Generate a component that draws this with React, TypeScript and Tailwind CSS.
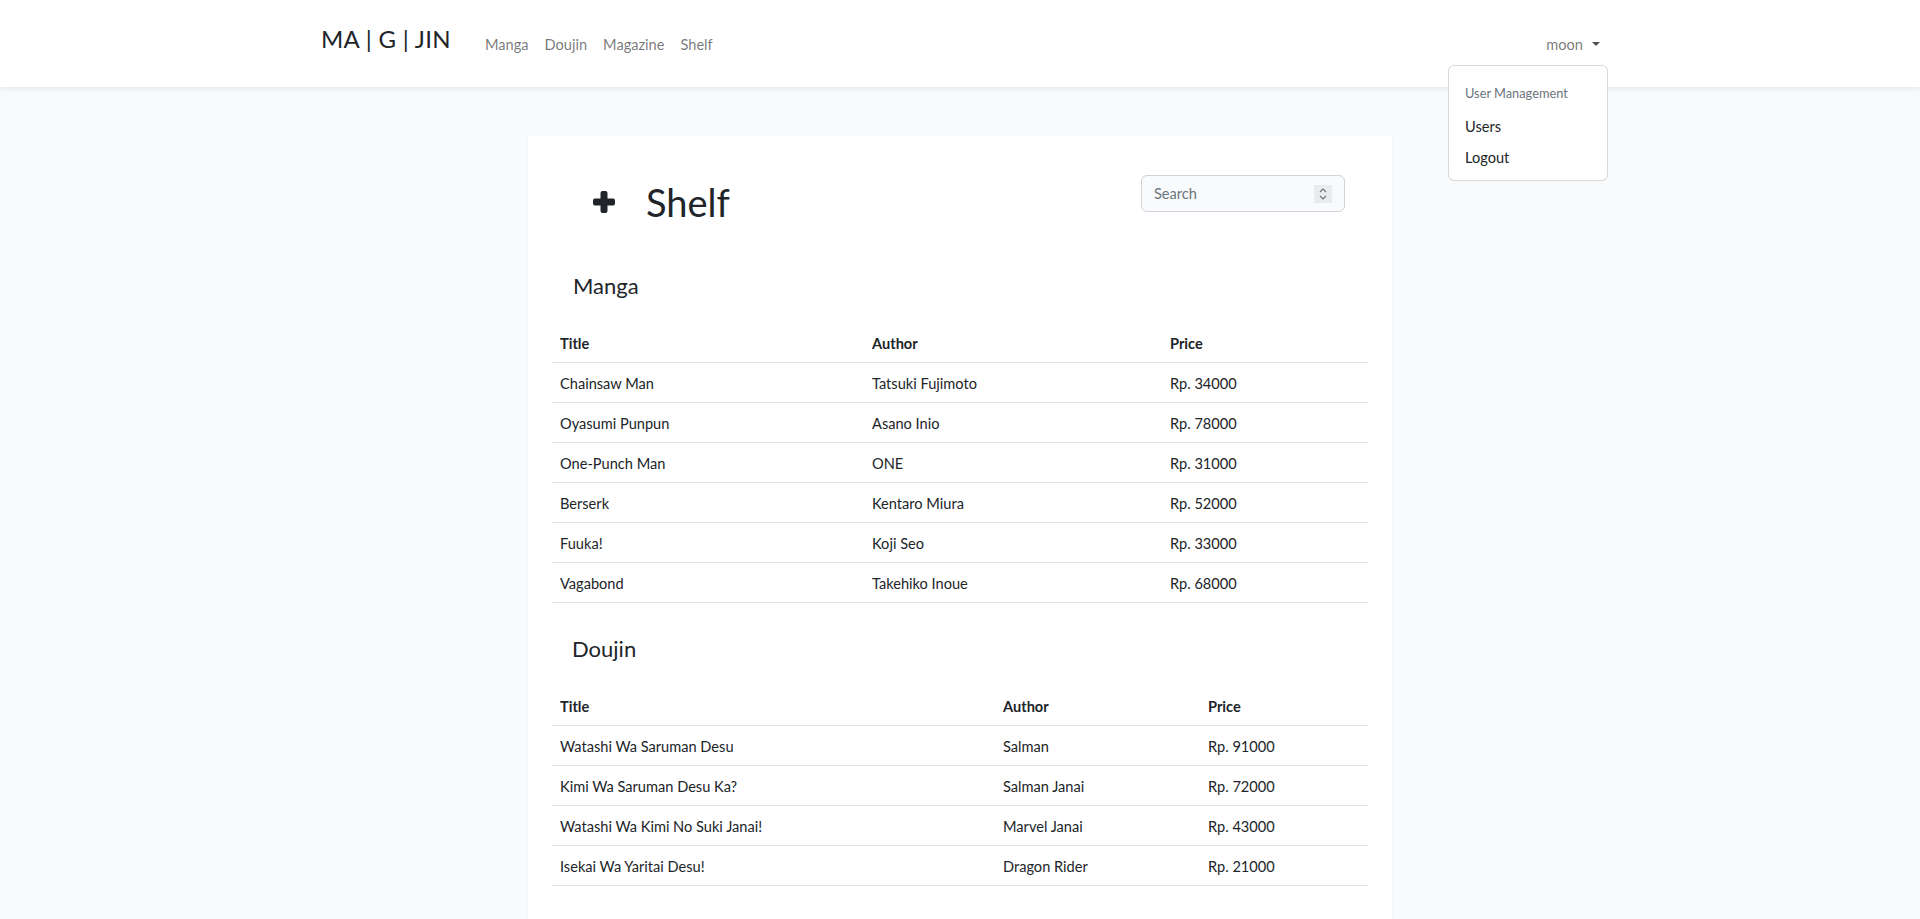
import React from 'react';

const manga = [
  { title: 'Chainsaw Man', author: 'Tatsuki Fujimoto', price: 34000 },
  { title: 'Oyasumi Punpun', author: 'Asano Inio', price: 78000 },
  { title: 'One-Punch Man', author: 'ONE', price: 31000 },
  { title: 'Berserk', author: 'Kentaro Miura', price: 52000 },
  { title: 'Fuuka!', author: 'Koji Seo', price: 33000 },
  { title: 'Vagabond', author: 'Takehiko Inoue', price: 68000 },
];

const doujin = [
  { title: 'Watashi Wa Saruman Desu', author: 'Salman', price: 91000 },
  { title: 'Kimi Wa Saruman Desu Ka?', author: 'Salman Janai', price: 72000 },
  { title: 'Watashi Wa Kimi No Suki Janai!', author: 'Marvel Janai', price: 43000 },
  { title: 'Isekai Wa Yaritai Desu!', author: 'Dragon Rider', price: 21000 },
];

type Book = { title: string; author: string; price: number };

function BookTable({ rows, cols }: { rows: Book[]; cols: [string, string, string] }) {
  return (
    <table className="w-full border-collapse text-left">
      <colgroup>
        <col className={cols[0]} />
        <col className={cols[1]} />
        <col className={cols[2]} />
      </colgroup>
      <thead>
        <tr>
          <th className="px-2 pt-[9px] pb-[7px] font-bold border-b border-[#dee2e6]">Title</th>
          <th className="px-2 pt-[9px] pb-[7px] font-bold border-b border-[#dee2e6]">Author</th>
          <th className="px-2 pt-[9px] pb-[7px] font-bold border-b border-[#dee2e6]">Price</th>
        </tr>
      </thead>
      <tbody>
        {rows.map(r => (
          <tr key={r.title}>
            <td className="px-2 pt-[9px] pb-[7px] border-b border-[#dee2e6]">{r.title}</td>
            <td className="px-2 pt-[9px] pb-[7px] border-b border-[#dee2e6]">{r.author}</td>
            <td className="px-2 pt-[9px] pb-[7px] border-b border-[#dee2e6]">Rp. {r.price}</td>
          </tr>
        ))}
      </tbody>
    </table>
  );
}

function PlusIcon() {
  return (
    <svg width="22" height="22" viewBox="0 0 22 22" className="text-[#212529]">
      <rect x="7.5" y="0" width="7" height="22" rx="2" fill="currentColor" />
      <rect x="0" y="7.5" width="22" height="7" rx="2" fill="currentColor" />
    </svg>
  );
}

export default function App() {
  return (
    <div className="min-h-screen bg-[#f8fafc] text-[#212529] text-[14.6px] leading-[23px] font-['Lato','Noto_Sans',sans-serif]">
      {/* Navbar */}
      <nav className="h-[87px] bg-white shadow-[0_2px_4px_rgba(0,0,0,0.075)]">
        <div className="relative w-[1296px] mx-auto h-full flex items-center">
          <a className="ml-[9px] mb-[9px] text-[24px] leading-none tracking-[0.3px] text-[#212529]">MA | G | JIN</a>
          <ul className="ml-[26px] mt-[2px] flex">
            {['Manga', 'Doujin', 'Magazine', 'Shelf'].map(l => (
              <li key={l}>
                <a className="block px-2 text-black/55">{l}</a>
              </li>
            ))}
          </ul>
          <div className="ml-auto mt-[2px]">
            <a className="flex items-center px-2 text-black/55">
              moon
              <span className="ml-[9px] mb-[2px] w-0 h-0 border-t-[4.5px] border-t-[#212529]/80 border-x-[4px] border-x-transparent" />
            </a>
          </div>
          {/* Dropdown menu */}
          <div className="absolute right-0 top-[65px] w-[160px] py-2 bg-white border border-black/15 rounded-[6px]">
            <div className="px-4 pt-[9px] pb-[7px] text-[12.8px] leading-[20px] text-[#6c757d]">User Management</div>
            <a className="block px-4 pt-[5px] pb-[3px] text-[#212529]">Users</a>
            <a className="block px-4 pt-[5px] pb-[3px] text-[#212529]">Logout</a>
          </div>
        </div>
      </nav>

      {/* Content */}
      <main className="pt-[49px]">
        <div className="w-[864px] mx-auto bg-white rounded-[4px] shadow-[0_1px_3px_rgba(0,0,0,0.06)] pb-[40px]">
          <div className="flex justify-between items-start pt-[39px] pl-[65px] pr-[47px]">
            <div className="mt-[3px] flex items-center gap-[31px]">
              <PlusIcon />
              <h1 className="text-[38px] leading-[48px] font-normal">Shelf</h1>
            </div>
            <div className="relative w-[204px] h-[37px]">
              <input
                placeholder="Search"
                className="w-full h-full pl-3 pr-8 bg-[#f8fafc] border border-[#ced4da] rounded-[6px] outline-none placeholder:text-[#6c757d]"
              />
              <span className="absolute right-[13px] top-[10px] w-[18px] h-[18px] bg-[#e9ecef] flex flex-col items-center justify-center gap-[2px]">
                <svg width="8" height="5" viewBox="0 0 8 5"><path d="M1 4 L4 1 L7 4" fill="none" stroke="#6c757d" strokeWidth="1.2" /></svg>
                <svg width="8" height="5" viewBox="0 0 8 5"><path d="M1 1 L4 4 L7 1" fill="none" stroke="#6c757d" strokeWidth="1.2" /></svg>
              </span>
            </div>
          </div>

          <section className="px-6 mt-[47px]">
            <h4 className="pl-[21px] text-[22px] leading-[26px] font-normal">Manga</h4>
            <div className="mt-[24px]">
              <BookTable rows={manga} cols={['w-[312px]', 'w-[298px]', 'w-[206px]']} />
            </div>
          </section>

          <section className="px-6 mt-[33px]">
            <h4 className="pl-[20px] text-[22px] leading-[26px] font-normal">Doujin</h4>
            <div className="mt-[24px]">
              <BookTable rows={doujin} cols={['w-[443px]', 'w-[205px]', 'w-[168px]']} />
            </div>
          </section>
        </div>
      </main>
    </div>
  );
}
